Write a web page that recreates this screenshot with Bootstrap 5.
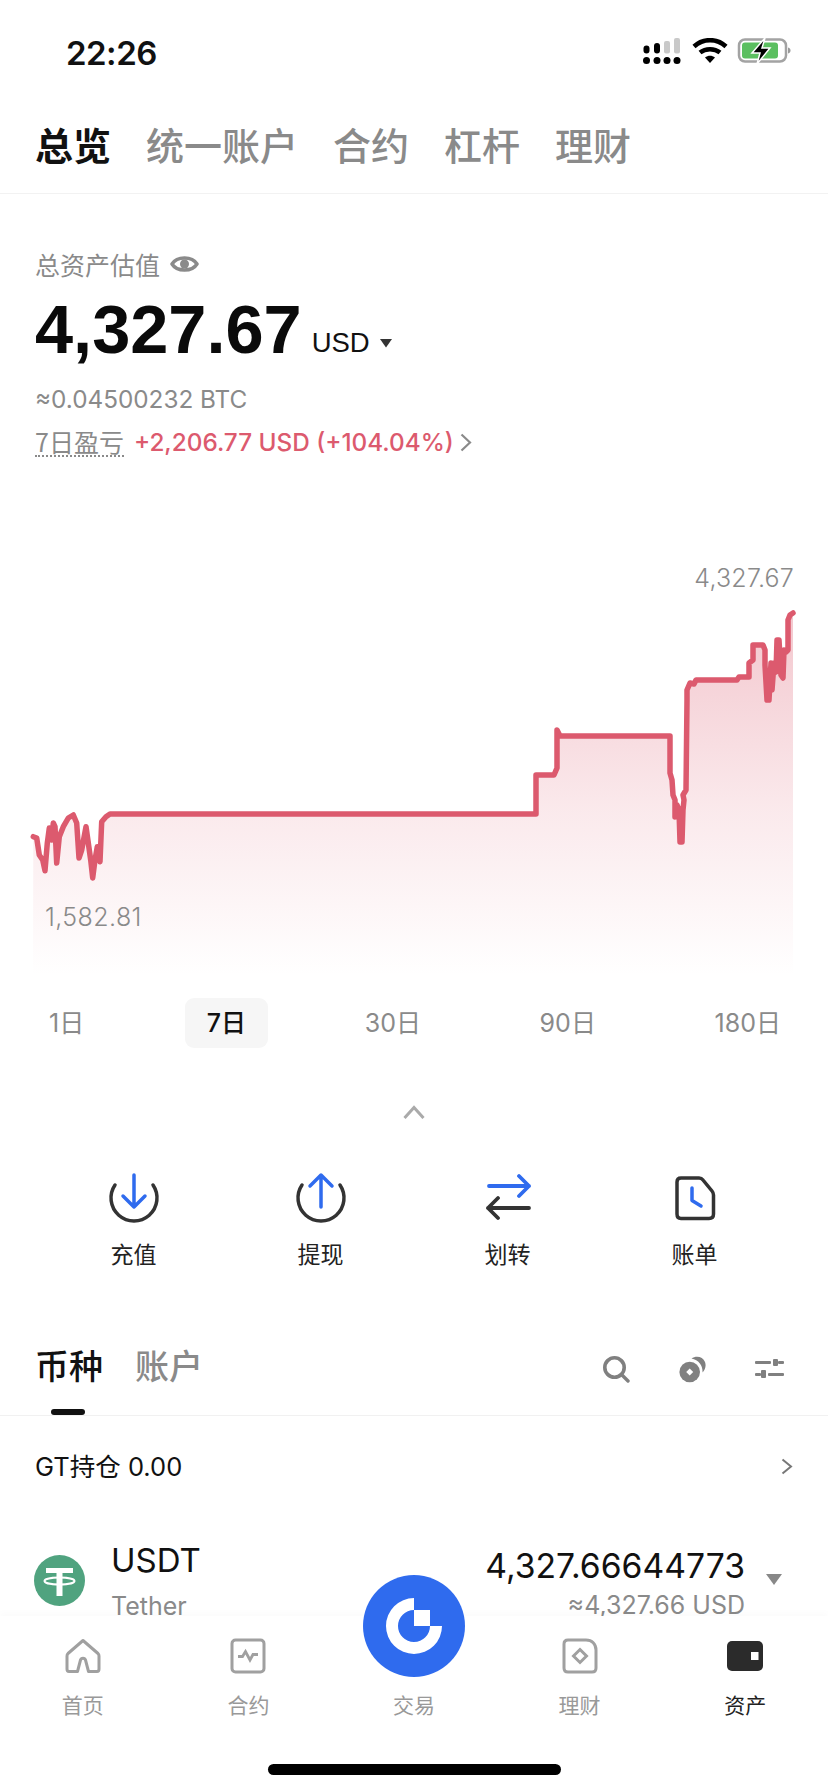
<!DOCTYPE html>
<html lang="zh">
<head>
<meta charset="utf-8">
<title>总览</title>
<link href="https://cdn.jsdelivr.net/npm/bootstrap@5.3.0/dist/css/bootstrap.min.css" rel="stylesheet">
<style>
:root{--ink:#111;--mute:#8a8a8a;--red:#dc5a6e;--blue:#2f6bee;}
html,body{height:1792px;overflow:hidden;background:#fff;}
body{font-family:"Inter","Noto Sans CJK SC",sans-serif;color:var(--ink);font-size:25px;line-height:30px;position:relative;}
.cn{font-family:"Noto Sans CJK SC",sans-serif;}
.status-row{height:106px;padding:0 36px 0 66px;}
.clock{font-family:"Inter",sans-serif;font-weight:600;font-size:33px;line-height:40px;letter-spacing:-.5px;}
.main-tabs{height:88px;padding:0 35px 12px;gap:35px;border-bottom:1px solid #f2f2f2;font-size:38px;line-height:50px;font-weight:500;color:var(--mute);}
.main-tabs .on{color:var(--ink);font-weight:700;}
.summary{padding:55px 0 0 35px;}
.label-row{color:var(--mute);gap:10px;height:30px;}
.hero-row{margin-top:15px;height:72px;}
.hero{font-family:"Liberation Sans",sans-serif;font-weight:700;font-size:68.5px;line-height:72px;color:#0a0a0a;}
.unit{font-family:"Liberation Sans",sans-serif;font-size:27.5px;line-height:30px;margin-left:10px;margin-top:34px;}
.unit-caret{margin-top:45px;margin-left:9px;}
.sub-btc{color:var(--mute);margin-top:18px;height:30px;font-size:24.3px;}
.pnl-row{margin-top:13px;height:30px;font-size:24.3px;}
.pnl-key{color:var(--mute);border-bottom:2px dotted #8a8a8a;line-height:26px;height:29px;font-size:25px;margin-right:10px;}
.pnl-val{color:var(--red);font-weight:500;margin-right:6px;}
.chart-wrap{margin-top:103px;height:415px;position:relative;}
.chart-wrap svg{display:block;}
.chart-tag{position:absolute;color:var(--mute);font-size:25px;font-weight:300;line-height:30px;}
.tag-hi{right:34px;top:3px;letter-spacing:.2px;}
.tag-lo{left:45px;top:342px;letter-spacing:.4px;}
.ranges{margin-top:23px;padding:0 25px 0 27px;color:var(--mute);font-size:25px;}
.range-item{height:50px;padding:0 22px;line-height:47px;border-radius:9px;}
.range-item.on{background:#f6f6f6;color:var(--ink);font-weight:500;}
.range-first{margin-right:4px;}
.fold{margin-top:57px;height:14px;}
.fold svg{display:block;}
.actions{margin-top:51px;padding:0 40px;}
.action{width:187px;gap:13px;font-size:23px;line-height:28px;color:#222;}
.action svg{display:block;}
.sub-tabs{margin-top:78px;height:71px;padding:0 44px 0 35px;border-bottom:1px solid #f1f1f1;position:relative;}
.sub-tabs .names{gap:32px;font-size:34px;line-height:40px;font-weight:500;color:var(--mute);}
.sub-tabs .names .on{color:var(--ink);}
.sub-tools{gap:49px;padding-top:11px;}
.slider-ico{margin-top:3px;}
.tab-mark{position:absolute;left:51px;bottom:0;width:34px;height:6px;background:#111;border-radius:3px;}
.gt-row{margin-top:35px;padding:0 35px 0 35px;height:30px;font-size:25.5px;}
.coin-row{margin-top:59px;padding:0 46px 0 34px;}
.coin-left{gap:26px;}
.coin-name{font-size:33px;line-height:40px;}
.coin-full{color:var(--mute);margin-top:11px;}
.coin-amt{font-size:33.7px;line-height:40px;margin-top:5px;}
.coin-usd{color:var(--mute);line-height:30px;margin-top:4px;}
.coin-caret{margin-left:21px;margin-top:-2px;}
.tabbar{position:absolute;left:0;right:0;bottom:0;height:176px;background:#fff;box-shadow:0 -4px 6px rgba(0,0,0,.015);}
.tabbar-item{width:20%;padding-top:22px;gap:18px;font-size:21px;line-height:24px;color:#999;height:100%;}
.tabbar-item.on{color:#222;}
.tab-ico{height:36px;display:block;}
.trade-fab{position:absolute;left:363px;top:1575px;width:102px;height:102px;}
.home-bar{position:absolute;left:268px;top:1764px;width:293px;height:11px;border-radius:6px;background:#000;}
</style>
</head>
<body>
<div class="d-flex justify-content-between align-items-center status-row">
  <div class="clock">22:26</div>
  <svg width="152" height="30" viewBox="0 0 152 30" aria-hidden="true">
    <g fill="#000"><circle cx="6.5" cy="22.5" r="3.5"/><circle cx="17" cy="22.5" r="3.5"/><circle cx="27" cy="22.5" r="3.5"/><circle cx="37" cy="22.5" r="3.5"/>
    <rect x="3.5" y="7.500" width="6" height="8" rx="3"/><rect x="14" y="5" width="6" height="10.500" rx="3"/></g>
    <g fill="#c9c9c9"><rect x="24" y="3" width="6" height="12.500" rx="2"/><rect x="34" y="0" width="6" height="15.500" rx="2"/></g>
    <g fill="none" stroke="#000" stroke-width="4.500"><path d="M54 8.500C63 0 77 0 86 8.500"/><path d="M60 14.500C65.500 10 74.500 10 80 14.500"/></g>
    <path d="M65 19.500C68 17 72 17 75 19.500L70 25Z" fill="#000"/>
    <rect x="99" y="1.500" width="47" height="22" rx="6" fill="none" stroke="#a3a3a3" stroke-width="2.500"/>
    <rect x="102" y="4.500" width="36" height="16" rx="3" fill="#5bbf60"/>
    <path d="M148 9.500c2 .6 2.500 1.500 2.500 3s-.5 2.400-2.500 3z" fill="#9a9a9a"/>
    <path d="M125 0L112 15H120L117 26L130 10H122Z" fill="#000" stroke="#fff" stroke-width="1.500"/>
  </svg>
</div>

<div class="d-flex align-items-center main-tabs cn">
  <span class="on">总览</span><span>统一账户</span><span>合约</span><span>杠杆</span><span>理财</span>
</div>

<div class="summary">
  <div class="d-flex align-items-center label-row"><span class="cn">总资产估值</span>
    <svg width="29" height="18" viewBox="0 0 29 18" aria-hidden="true"><path d="M2 9C7 1 22 1 27 9C22 17 7 17 2 9Z" fill="none" stroke="#8a8a8a" stroke-width="3.500" stroke-linejoin="round"/><circle cx="14.500" cy="9" r="4.500" fill="#8a8a8a"/></svg>
  </div>
  <div class="d-flex hero-row"><span class="hero">4,327.67</span><span class="unit">USD</span>
    <svg class="unit-caret" width="14" height="9" viewBox="0 0 14 9" aria-hidden="true"><path d="M1 0H13L7 8.500Z" fill="#333"/></svg>
  </div>
  <div class="sub-btc">≈0.04500232 BTC</div>
  <div class="d-flex align-items-center pnl-row">
    <span class="pnl-key cn">7日盈亏</span><span class="pnl-val">+2,206.77 USD (+104.04%)</span>
    <svg width="12" height="19" viewBox="0 0 12 19" aria-hidden="true"><path d="M1.500 1.500L10 9.500L1.500 17.500" fill="none" stroke="#8a8a8a" stroke-width="2.200"/></svg>
  </div>
</div>

<div class="chart-wrap">
  <svg width="828" height="415" viewBox="0 560 828 415" aria-hidden="true">
    <defs><linearGradient id="area" gradientUnits="userSpaceOnUse" x1="0" y1="613" x2="0" y2="975"><stop offset="0" stop-color="#dc5a6e" stop-opacity=".34"/><stop offset=".55" stop-color="#dc5a6e" stop-opacity=".13"/><stop offset="1" stop-color="#dc5a6e" stop-opacity="0"/></linearGradient></defs>
    <path d="M33.300 836.700L36.700 838L39.300 855L42.700 860L45 870.700L47.300 843L49.300 828L51.700 840L53.300 823L55 826.700L56.700 863L59.300 836.700L63.300 826.700L68.300 818L73.300 815L76.700 823L79 858L81.700 850L86 826.700L88.300 843L90.700 860L92.700 878L95 860L97.300 846.700L100 861.700L101.700 821.700L106 816.700L110 814H536V775H554L557 768V730L560 736H670V773L672 780L673 795L675 800L675 817L677 805L679 810L680 842H682L683 810L684 800L683 795L686 790L687 700V690L690 683L694 684L696 680H737L739 677H749V663L753 660V645H763L765 650V665L767 700H769L771 663L772 690L774 663L776 672L777 640H779L781 675L783 678L784 650L786 652L788 650V620L790 615L793 613V975H33Z" fill="url(#area)"/>
    <path d="M33.300 836.700L36.700 838L39.300 855L42.700 860L45 870.700L47.300 843L49.300 828L51.700 840L53.300 823L55 826.700L56.700 863L59.300 836.700L63.300 826.700L68.300 818L73.300 815L76.700 823L79 858L81.700 850L86 826.700L88.300 843L90.700 860L92.700 878L95 860L97.300 846.700L100 861.700L101.700 821.700L106 816.700L110 814H536V775H554L557 768V730L560 736H670V773L672 780L673 795L675 800L675 817L677 805L679 810L680 842H682L683 810L684 800L683 795L686 790L687 700V690L690 683L694 684L696 680H737L739 677H749V663L753 660V645H763L765 650V665L767 700H769L771 663L772 690L774 663L776 672L777 640H779L781 675L783 678L784 650L786 652L788 650V620L790 615L793 613" fill="none" stroke="#dc5a6e" stroke-width="5.500" stroke-linejoin="round" stroke-linecap="round"/>
  </svg>
  <span class="chart-tag tag-hi">4,327.67</span>
  <span class="chart-tag tag-lo">1,582.81</span>
</div>

<div class="d-flex justify-content-between ranges">
  <span class="range-item range-first">1<span class="cn">日</span></span>
  <span class="range-item on">7<span class="cn">日</span></span>
  <span class="range-item">30<span class="cn">日</span></span>
  <span class="range-item">90<span class="cn">日</span></span>
  <span class="range-item">180<span class="cn">日</span></span>
</div>

<div class="d-flex justify-content-center fold">
  <svg width="22" height="14" viewBox="0 0 22 14" aria-hidden="true"><path d="M1.500 13L11 2.500L20.500 13" fill="none" stroke="#aaa" stroke-width="3"/></svg>
</div>

<div class="d-flex actions">
  <div class="d-flex flex-column align-items-center action cn">
    <svg width="56" height="56" viewBox="0 0 56 56" aria-hidden="true"><path d="M9 15A23 23 0 1 0 47 15" fill="none" stroke="#333" stroke-width="3.500" stroke-linecap="round"/><path d="M28 5V37M17 26L28 37L39 26" fill="none" stroke="#2f6bee" stroke-width="3.500" stroke-linecap="round" stroke-linejoin="round"/></svg>
    <span>充值</span>
  </div>
  <div class="d-flex flex-column align-items-center action cn">
    <svg width="56" height="56" viewBox="0 0 56 56" aria-hidden="true"><path d="M9 15A23 23 0 1 0 47 15" fill="none" stroke="#333" stroke-width="3.500" stroke-linecap="round"/><path d="M28 37V5M17 16L28 5L39 16" fill="none" stroke="#2f6bee" stroke-width="3.500" stroke-linecap="round" stroke-linejoin="round"/></svg>
    <span>提现</span>
  </div>
  <div class="d-flex flex-column align-items-center action cn">
    <svg width="56" height="56" viewBox="0 0 56 56" aria-hidden="true"><path d="M9 16H49M39 6L49 16L39 26" fill="none" stroke="#2f6bee" stroke-width="3.800" stroke-linecap="round" stroke-linejoin="round"/><path d="M49 38H8M18 28L8 38L18 48" fill="none" stroke="#333" stroke-width="3.800" stroke-linecap="round" stroke-linejoin="round"/></svg>
    <span>划转</span>
  </div>
  <div class="d-flex flex-column align-items-center action cn">
    <svg width="56" height="56" viewBox="0 0 56 56" aria-hidden="true"><path d="M14 8H32C33.500 8 35 8.600 36 10L45 21C46 22.200 46.500 23.500 46.500 25V44C46.500 47 44.500 48.500 42 48.500H14C11.500 48.500 10 47 10 44V12C10 9.500 11.500 8 14 8Z" fill="none" stroke="#333" stroke-width="3.500"/><path d="M25 18V30.500L34 36" fill="none" stroke="#2f6bee" stroke-width="3.500" stroke-linecap="round" stroke-linejoin="round"/></svg>
    <span>账单</span>
  </div>
</div>

<div class="d-flex justify-content-between sub-tabs">
  <div class="d-flex names cn"><span class="on">币种</span><span>账户</span></div>
  <div class="d-flex sub-tools align-items-start">
    <svg width="27" height="27" viewBox="0 0 27 27" aria-hidden="true"><circle cx="11.500" cy="11.500" r="9.700" fill="none" stroke="#808080" stroke-width="3.600"/><path d="M18.500 18.500L25 25" stroke="#808080" stroke-width="3.400" stroke-linecap="round"/></svg>
    <svg width="27" height="27" viewBox="0 0 27 27" aria-hidden="true"><path d="M12.500 2.500C17-.5 24 .5 26 6C27.500 10 26 14 23.500 16.500C24 10 20 4 12.500 2.500Z" fill="#808080"/><circle cx="10.700" cy="16" r="10.300" fill="#808080"/><path d="M10.700 12.500L14.200 16L10.700 19.500L7.200 16Z" fill="#fff"/></svg>
    <svg class="slider-ico" width="29" height="20" viewBox="0 0 29 20" aria-hidden="true"><g fill="#808080"><rect x="0" y="2" width="16" height="3" rx="1"/><rect x="18" y="0" width="5" height="7" rx="1"/><rect x="23" y="2" width="6" height="3" rx="1"/><rect x="0" y="14" width="6" height="3" rx="1"/><rect x="6" y="11" width="5" height="8" rx="1"/><rect x="13" y="14" width="16" height="3" rx="1"/></g></svg>
  </div>
  <span class="tab-mark"></span>
</div>

<div class="d-flex justify-content-between align-items-center gt-row">
  <span>GT<span class="cn">持仓</span> 0.00</span>
  <svg width="12" height="17" viewBox="0 0 12 17" aria-hidden="true"><path d="M1.500 1.500L10 8.500L1.500 15.500" fill="none" stroke="#777" stroke-width="2"/></svg>
</div>

<div class="d-flex justify-content-between align-items-center coin-row">
  <div class="d-flex align-items-center coin-left">
    <svg width="51" height="51" viewBox="0 0 51 51" aria-hidden="true"><circle cx="25.500" cy="25.500" r="25.500" fill="#50a37f"/><path d="M12 13H39V18H28.500V41H22.500V18H12Z" fill="#fff"/><ellipse cx="25.500" cy="26" rx="15" ry="3.500" fill="none" stroke="#fff" stroke-width="2"/></svg>
    <div><div class="coin-name">USDT</div><div class="coin-full">Tether</div></div>
  </div>
  <div class="d-flex align-items-center">
    <div class="text-end"><div class="coin-amt">4,327.66644773</div><div class="coin-usd">≈4,327.66 USD</div></div>
    <svg class="coin-caret" width="16" height="11" viewBox="0 0 16 11" aria-hidden="true"><path d="M0 0H16L8 11Z" fill="#888"/></svg>
  </div>
</div>

<nav class="d-flex tabbar cn">
  <div class="d-flex flex-column align-items-center tabbar-item">
    <svg class="tab-ico" width="36" height="36" viewBox="0 0 36 36" aria-hidden="true"><path d="M18 2.500L3 15.500C2.300 16.200 2 17 2 18V31C2 32.500 2.700 33.500 4 33.500H12.500L15.500 22C16.200 19.500 19.800 19.500 20.500 22L23.500 33.500H32C33.300 33.500 34 32.500 34 31V18C34 17 33.700 16.200 33 15.500Z" fill="none" stroke="#a0a0a0" stroke-width="3" stroke-linejoin="round"/></svg>
    <span>首页</span>
  </div>
  <div class="d-flex flex-column align-items-center tabbar-item">
    <svg class="tab-ico" width="36" height="36" viewBox="0 0 36 36" aria-hidden="true"><rect x="2" y="2" width="32" height="32" rx="3.500" fill="none" stroke="#a0a0a0" stroke-width="3"/><path d="M8 18.500H12.500L15.500 13.500L20 22L23 16.500H28" fill="none" stroke="#a0a0a0" stroke-width="2.800"/></svg>
    <span>合约</span>
  </div>
  <div class="d-flex flex-column align-items-center tabbar-item">
    <span class="tab-ico"></span>
    <span>交易</span>
  </div>
  <div class="d-flex flex-column align-items-center tabbar-item">
    <svg class="tab-ico" width="36" height="36" viewBox="0 0 36 36" aria-hidden="true"><path d="M6 2H24C30 2 34 6 34 12V30C34 32.500 32.500 34 30 34H6C3.500 34 2 32.500 2 30V6C2 3.500 3.500 2 6 2Z" fill="none" stroke="#a0a0a0" stroke-width="3"/><path d="M18 11.500L24.500 18L18 24.500L11.500 18Z" fill="none" stroke="#a0a0a0" stroke-width="3"/></svg>
    <span>理财</span>
  </div>
  <div class="d-flex flex-column align-items-center tabbar-item on">
    <svg class="tab-ico" width="36" height="36" viewBox="0 0 36 36" aria-hidden="true"><rect x="0" y="3" width="36" height="30" rx="5" fill="#2b2b2b"/><rect x="24" y="14" width="7.500" height="8" fill="#fff"/></svg>
    <span>资产</span>
  </div>
</nav>

<svg class="trade-fab" viewBox="0 0 102 102" aria-hidden="true"><circle cx="51" cy="51" r="51" fill="#2f6bee"/><path d="M51 23A28 28 0 1 0 79 51H67A16 16 0 1 1 51 35Z" fill="#fff"/><rect x="51" y="35" width="16" height="16" fill="#fff"/></svg>
<div class="home-bar"></div>

<script src="https://cdn.jsdelivr.net/npm/bootstrap@5.3.0/dist/js/bootstrap.bundle.min.js"></script>
</body>
</html>
